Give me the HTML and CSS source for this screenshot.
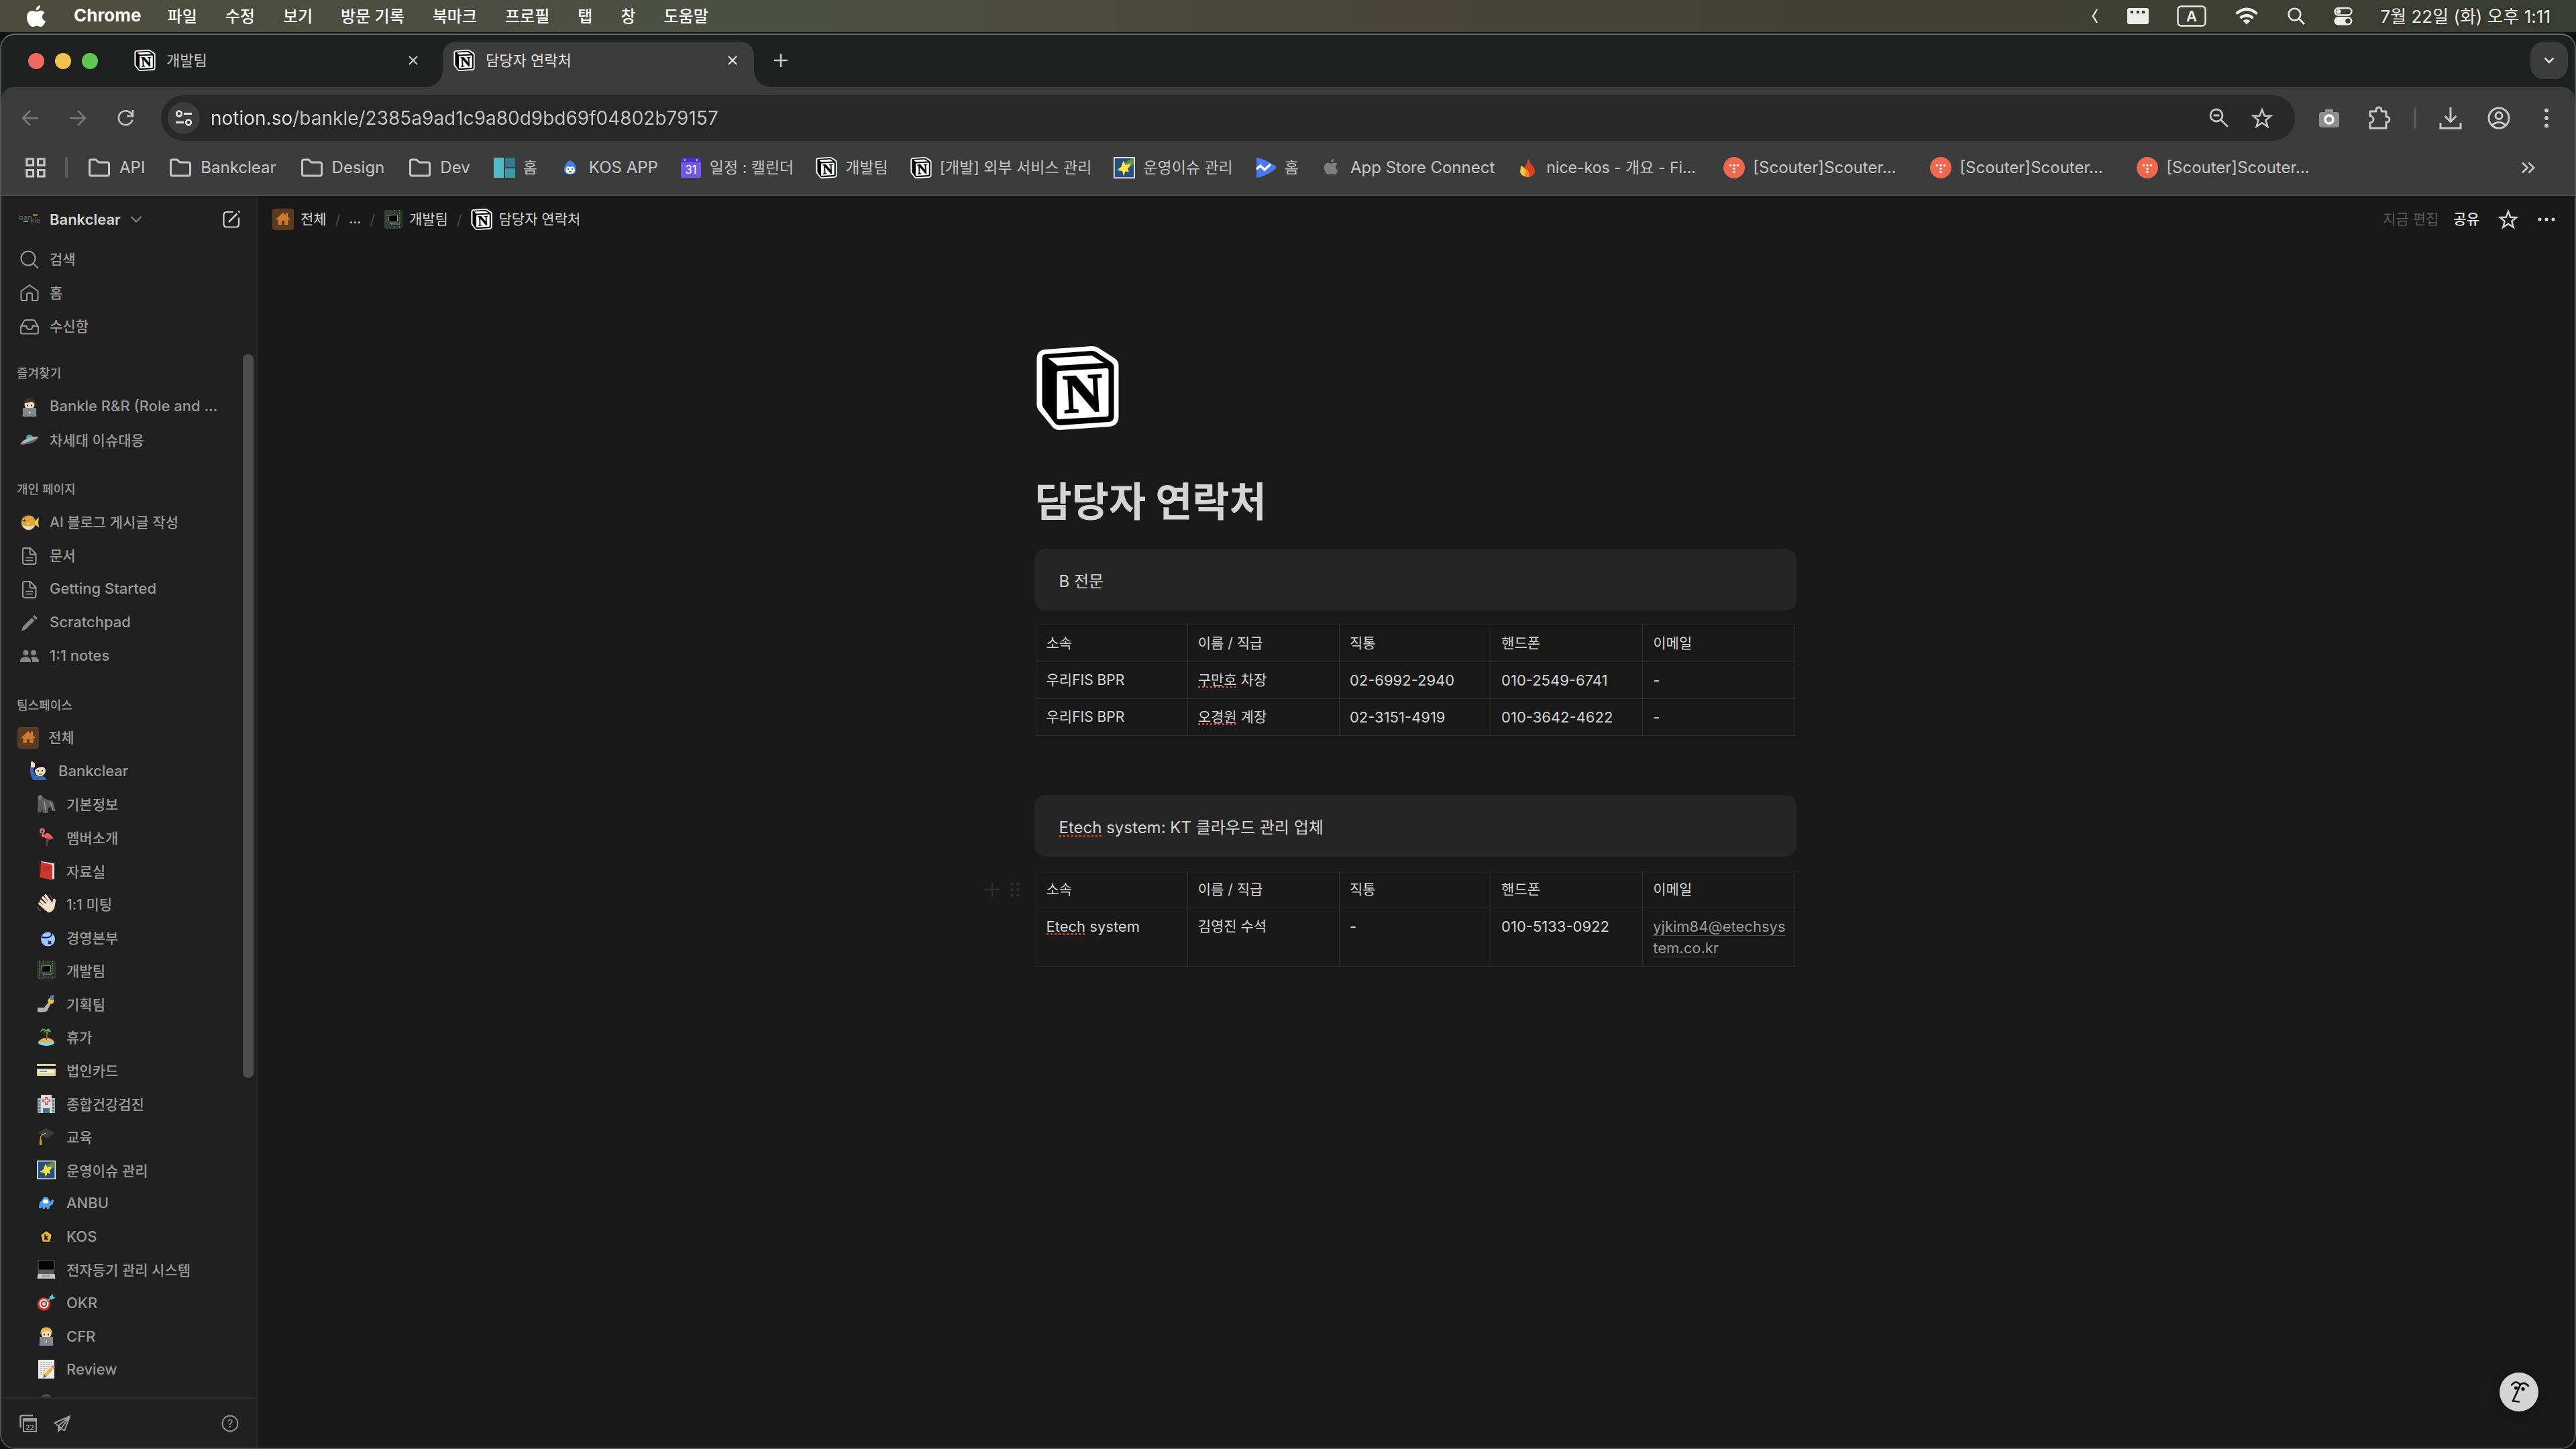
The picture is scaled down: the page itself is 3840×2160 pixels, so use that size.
FILE: index.html
```html
<!DOCTYPE html>
<html lang="ko">
<head>
<meta charset="utf-8">
<title>담당자 연락처</title>
<link rel="stylesheet" href="styles.css">
</head>
<body>
<svg class="sprite" aria-hidden="true">
  <symbol id="notion" viewBox="0 0 122 125">
    <path fill="#fff" d="M12 5 82 0Q87 0 91 2L116 18Q122 22 122 29V106Q121 119 108 120L34 125Q27 125 23 120L4 97Q0 92 0 87V18Q1 6 12 5Z"/>
    <path fill="#000" d="M13 12 82 7Q86 7 89 9L111 24Q115 27 115 31V106Q114 113 107 113L34 118Q30 118 27 115L10 92Q8 89 8 86V18Q8 12 13 12Z"/>
    <path fill="#fff" d="M17 18 82 14 100 25 31 29ZM33 37 104 33Q107 33 107 36V102Q107 105 104 105L33 109Q30 109 30 106V40Q30 37 33 37Z"/>
    <text x="69" y="98" transform="rotate(-3 69 72)" text-anchor="middle" font-family="Liberation Serif, serif" font-weight="700" font-size="82" stroke="#000" stroke-width="2">N</text>
  </symbol>
  <symbol id="apple" viewBox="0 0 28 32"><path fill="currentColor" d="M20 0C20.400 4 16.500 7.600 13.600 7.400 13.300 3.800 16.600.4 20 0ZM26.500 11C21 14.500 22 21.500 28 23.600 26.500 27.500 23.600 32 20.700 32 18.300 32 17.600 30.500 14.900 30.500 12 30.500 11.200 32 9 32 4.500 32 0 24 0 17.500 0 11 4.200 8 8 8 10.500 8 12.600 9.600 14.200 9.600 15.800 9.600 18 7.800 21 7.800 23 7.800 25.200 8.800 26.500 11Z"/></symbol>
  <symbol id="x" viewBox="0 0 16 16"><path d="M2 2 14 14M14 2 2 14" fill="none" stroke="currentColor" stroke-width="2.200"/></symbol>
  <symbol id="folder" viewBox="0 0 36 36"><path d="M3.500 8.500Q3.500 6 6 6H13L17 10H30Q32.500 10 32.500 12.500V27.500Q32.500 30 30 30H6Q3.500 30 3.500 27.500Z" fill="none" stroke="currentColor" stroke-width="3" stroke-linejoin="round"/></symbol>
  <symbol id="star" viewBox="0 0 32 32"><path d="M16 3.500 19.500 12.500 29 13 21.600 19 24.200 28.500 16 23.200 7.800 28.500 10.400 19 3 13 12.500 12.500Z" fill="none" stroke="currentColor" stroke-width="2.600" stroke-linejoin="miter"/></symbol>
  <symbol id="house" viewBox="0 0 32 32"><rect width="32" height="32" rx="4" fill="#5a3b22"/><path fill="#cb7b30" d="M16 6 20 9.500V6.500H23V12.300L26 15V16.500H23.500V24H18V18H14V24H8.500V16.500H6V15Z"/></symbol>
  <symbol id="term" viewBox="0 0 28 28"><rect width="28" height="28" rx="4" fill="#2e382e"/><path d="M3.500 0V28M9.500 0V28M16.500 0V28M23.500 0V28" stroke="#3a8a32" stroke-width="1.200" stroke-dasharray="2 1.500"/><path fill="#000" stroke="#999" d="M6.500 8 20.500 7.500V17L8 17.500Z"/><path fill="#888" stroke="#111" d="M6 18H21L25.500 22.500H11Z"/><path d="M10 19.500H21M12 21H23" stroke="#333" stroke-width=".8"/><path d="M8.500 10 10 11" stroke="#4b4"/></symbol>
  <symbol id="doc" viewBox="0 0 28 28"><path d="M6 2H15L23.500 10.500V23Q23.500 26 20.500 26H7Q4 26 4 23V4Q4 2 6 2ZM14.500 2V9Q14.500 11.500 17 11.500H23.500" fill="none" stroke="currentColor" stroke-width="2"/><path d="M8.500 16.500H19M8.500 20.500H19" stroke="currentColor" stroke-width="1.600"/></symbol>
  <symbol id="shoot" viewBox="0 0 28 28"><rect width="28" height="28" fill="#f2f2ee"/><rect x="1.500" y="1.500" width="25" height="25" fill="#274f80"/><path fill="#71893f" d="M13 8 24 2H26.500V9L18 16Z"/><path fill="#ffe34d" d="M12.500 5 15.500 10.500 23 9 18.500 15 20 20 15.500 18.500 13 25 11.500 18.500 4.500 17 10 13Z"/></symbol>
  <symbol id="scouter" viewBox="0 0 32 32"><circle cx="16" cy="16" r="16" fill="#ee6950"/><path fill="#fff" d="M9 11H12V14H9ZM14.500 11H17.500V14H14.500ZM20 11H23V14H20ZM14.500 16H17.500V19H14.500ZM14.500 21H17.500V24H14.500Z"/></symbol>
  <symbol id="coder" viewBox="0 0 28 28"><path fill="#3028c8" d="M2 28Q3 22 7 21H21Q25 22 26 28Z"/><circle cx="14" cy="10" r="7.500" class="skin"/><path class="hair" d="M5.500 12Q4 1 14 .5 24 1 22.500 12 21 6 16 6 9 8 6.500 8Z"/><path d="M10 11.500H12M16 11.500H18" stroke="#222" stroke-width="2"/><rect x="4" y="15" width="20" height="13" rx="1" fill="#868789"/><circle cx="14" cy="22" r="1.200" fill="#eee"/></symbol>
</svg>

<header class="menubar">
  <nav class="menus" aria-label="메뉴 막대">
    <button class="mb" aria-label="Apple"><svg width="28" height="32"><use href="#apple"/></svg></button>
    <button class="mb app">Chrome</button>
    <button class="mb word">파일</button><button class="mb word">수정</button><button class="mb word">보기</button><button class="mb word">방문 기록</button><button class="mb word">북마크</button><button class="mb word">프로필</button><button class="mb word">탭</button><button class="mb word">창</button><button class="mb word">도움말</button>
  </nav>
  <div class="status">
    <button class="mb" aria-label="더 보기"><svg width="12" height="24" viewBox="0 0 12 24"><path d="M9 2 3 12 9 22" fill="none" stroke="currentColor" stroke-width="2.400"/></svg></button>
    <button class="mb" aria-label="키보드"><svg width="32" height="24" viewBox="0 0 32 24"><rect width="32" height="24" rx="3" fill="currentColor"/><path d="M5 6H9M14 6H18M22 6H26" stroke="#333" stroke-width="4"/></svg></button>
    <button class="mb" aria-label="입력 소스"><svg width="44" height="32" viewBox="0 0 44 32"><rect x="1.500" y="1.500" width="41" height="29" rx="5" fill="none" stroke="currentColor" stroke-width="2.400"/><text x="22" y="24" text-anchor="middle" font-size="22" font-weight="600" fill="currentColor">A</text></svg></button>
    <button class="mb" aria-label="Wi-Fi"><svg width="36" height="26" viewBox="0 0 36 26"><path d="M2.500 9.500Q18-4 33.500 9.500M8.500 16Q18 8 27.500 16" fill="none" stroke="currentColor" stroke-width="4.200"/><path fill="currentColor" d="M12.500 20Q18 16 23.500 20L18 25.500Z"/></svg></button>
    <button class="mb" aria-label="Spotlight"><svg width="28" height="28" viewBox="0 0 28 28"><circle cx="11.500" cy="11.500" r="8.800" fill="none" stroke="currentColor" stroke-width="2.600"/><path d="M18 18 26 26" stroke="currentColor" stroke-width="3"/></svg></button>
    <button class="mb" aria-label="제어 센터"><svg width="28" height="28" viewBox="0 0 28 28"><rect x="1.500" y="2" width="25" height="10.500" rx="5.200" fill="none" stroke="currentColor" stroke-width="2.400"/><circle cx="7" cy="7.200" r="3.500" fill="currentColor"/><rect x=".5" y="15" width="27" height="12.500" rx="6.200" fill="currentColor"/><circle cx="21" cy="21.200" r="3.800" fill="#3a3d34"/></svg></button>
    <time class="clock word">7월 22일 (화) 오후 1:11</time>
  </div>
</header>

<div class="window">
  <div class="tabstrip">
    <div class="lights"><button class="light red" aria-label="닫기"></button><button class="light amber" aria-label="최소화"></button><button class="light green" aria-label="확대"></button></div>
    <div class="tab"><svg width="32" height="32"><use href="#notion"/></svg><a href="#dev" class="tab-title">개발팀</a><button class="ic" aria-label="탭 닫기"><svg width="16" height="16"><use href="#x"/></svg></button></div>
    <div class="tab active"><svg width="32" height="32"><use href="#notion"/></svg><a href="#contacts" class="tab-title">담당자 연락처</a><button class="ic" aria-label="탭 닫기"><svg width="16" height="16"><use href="#x"/></svg></button></div>
    <button class="ic newtab" aria-label="새 탭"><svg width="20" height="20" viewBox="0 0 20 20"><path d="M10 0V20M0 10H20" stroke="currentColor" stroke-width="2.600"/></svg></button>
    <button class="ic tabsearch" aria-label="탭 검색"><svg width="16" height="10" viewBox="0 0 16 10"><path d="M1.500 1.500 8 8 14.500 1.500" fill="none" stroke="currentColor" stroke-width="2.600"/></svg></button>
  </div>

  <div class="chrome">
    <div class="toolbar">
      <div class="navs">
        <button class="ic dim" aria-label="뒤로"><svg width="26" height="26" viewBox="0 0 26 26"><path d="M25 13H2M13 2 2 13 13 24" fill="none" stroke="currentColor" stroke-width="2.600"/></svg></button>
        <button class="ic dim" aria-label="앞으로"><svg width="26" height="26" viewBox="0 0 26 26"><path d="M1 13H24M13 2 24 13 13 24" fill="none" stroke="currentColor" stroke-width="2.600"/></svg></button>
        <button class="ic" aria-label="새로고침"><svg width="26" height="26" viewBox="0 0 26 26"><path d="M23.500 15.500A10.500 10.500 0 1 1 21 5.500L23 8" fill="none" stroke="currentColor" stroke-width="2.600"/><path d="M24 1V10H15" fill="none" stroke="currentColor" stroke-width="2.600"/></svg></button>
      </div>
      <div class="omnibox">
        <button class="ic site" aria-label="사이트 정보"><svg width="26" height="26" viewBox="0 0 26 26"><g fill="none" stroke="currentColor" stroke-width="2.800"><circle cx="6" cy="6.500" r="3.800"/><path d="M13 6.500H25M1 19.500H13"/><circle cx="20" cy="19.500" r="3.800"/></g></svg></button>
        <input class="url" type="text" aria-label="주소창" value="notion.so/bankle/2385a9ad1c9a80d9bd69f04802b79157">
        <button class="ic" aria-label="확대/축소"><svg width="32" height="32" viewBox="0 0 32 32"><g fill="none" stroke="currentColor" stroke-width="2.800"><circle cx="12" cy="12" r="9"/><path d="M18.500 18.500 29 29M7.500 12H16.500"/></g></svg></button>
        <button class="ic" aria-label="북마크 추가"><svg width="32" height="32"><use href="#star"/></svg></button>
      </div>
      <div class="exts">
        <button class="ic" aria-label="캡처"><svg width="32" height="32" viewBox="0 0 32 32"><rect x="1" y="7" width="30" height="23" rx="4" fill="#8e8e8e"/><rect x="10" y="2" width="12" height="8" rx="3" fill="#8e8e8e"/><circle cx="16" cy="18" r="6" fill="#8e8e8e" stroke="#fff" stroke-width="3.500"/></svg></button>
        <button class="ic" aria-label="확장 프로그램"><svg width="34" height="36" viewBox="0 0 34 36"><path d="M3 8H12V6A4 4 0 0 1 20 6V8H27V16H28A4 4 0 0 1 28 24H27V33H3V25A5 5 0 0 0 3 15Z" fill="none" stroke="currentColor" stroke-width="3" stroke-linejoin="round"/></svg></button>
        <span class="sep"></span>
        <button class="ic" aria-label="다운로드"><svg width="34" height="34" viewBox="0 0 34 34"><path d="M17 1V22M8.500 14 17 22.500 25.500 14M2 24V32H32V24" fill="none" stroke="currentColor" stroke-width="3"/></svg></button>
        <button class="ic" aria-label="프로필"><svg width="34" height="34" viewBox="0 0 34 34"><g fill="none" stroke="currentColor" stroke-width="3"><circle cx="17" cy="17" r="15"/><circle cx="17" cy="13.500" r="5"/><path d="M7 27.500Q17 19 27 27.500"/></g></svg></button>
        <button class="ic" aria-label="메뉴"><svg width="8" height="32" viewBox="0 0 8 32"><g fill="currentColor"><circle cx="4" cy="4.500" r="3"/><circle cx="4" cy="16" r="3"/><circle cx="4" cy="27.500" r="3"/></g></svg></button>
      </div>
    </div>
    <nav class="bookmarks" aria-label="북마크">
      <button class="ic" aria-label="앱"><svg width="30" height="30" viewBox="0 0 30 30"><path d="M2 2H11.500V11.500H2ZM18.500 2H28V11.500H18.500ZM2 18.500H11.500V28H2ZM18.500 18.500H28V28H18.500Z" fill="none" stroke="currentColor" stroke-width="3.200"/></svg></button>
      <span class="sep"></span>
      <a class="bm folder" href="#api"><svg width="36" height="36"><use href="#folder"/></svg>API</a>
      <a class="bm folder" href="#bc"><svg width="36" height="36"><use href="#folder"/></svg>Bankclear</a>
      <a class="bm folder" href="#design"><svg width="36" height="36"><use href="#folder"/></svg>Design</a>
      <a class="bm folder" href="#devs"><svg width="36" height="36"><use href="#folder"/></svg>Dev</a>
      <a class="bm ko" href="#home"><svg width="32" height="32" viewBox="0 0 32 32"><path fill="#53b9c4" d="M0 1H15V31H0Z"/><path fill="#357c8a" d="M17 1H32V15H17Z"/><path fill="#4098a7" d="M17 17H32V31H17Z"/></svg>홈</a>
      <a class="bm" href="#kosapp"><svg width="32" height="32" viewBox="0 0 32 32"><path fill="#3f7de8" d="M16 5Q23 7 25 17 26 26 16 26 6 26 7 17 9 7 16 5Z"/><path fill="#fff" d="M10 16Q12 13 16 15 20 13 22 16 25 25 16 25 7 25 10 16Z"/><path d="M12 18H14M18 18H20M14 22H18" stroke="#333" stroke-width="1.500"/></svg>KOS APP</a>
      <a class="bm ko" href="#cal"><svg width="32" height="32" viewBox="0 0 32 32"><rect x="1" y="1" width="30" height="30" rx="2" fill="#7357e8"/><path fill="#4f2fc0" d="M1 1H31V8H1Z"/><path d="M6 4.500H8M24 4.500H26" stroke="#fff" stroke-width="2"/><text x="16" y="25" text-anchor="middle" font-size="17" fill="#fff">31</text></svg>일정 : 캘린더</a>
      <a class="bm ko" href="#dev"><svg width="32" height="32"><use href="#notion"/></svg>개발팀</a>
      <a class="bm ko" href="#ext"><svg width="32" height="32"><use href="#notion"/></svg>[개발] 외부 서비스 관리</a>
      <a class="bm ko" href="#issues"><svg width="32" height="32"><use href="#shoot"/></svg>운영이슈 관리</a>
      <a class="bm ko" href="#home2"><svg width="32" height="32" viewBox="0 0 32 32"><path fill="#4a7bee" d="M2 1Q12 2 30 13 33 16 30 18 16 29 2 31Z"/><path d="M2 18 8 13 14 19 23 11" fill="none" stroke="#fff" stroke-width="3.500"/></svg>홈</a>
      <a class="bm" href="#asc"><svg width="32" height="32" viewBox="-7 -4 46 46" class="grey"><use href="#apple" width="30" height="34"/></svg>App Store Connect</a>
      <a class="bm ko cut" href="#nice"><svg width="32" height="32" viewBox="0 0 32 32"><path fill="#d8441f" d="M17 2Q20 10 25 15 31 26 19 30 10 28 10 18 15 12 17 2Z"/><path fill="#f9c440" d="M6 13Q15 16 18 30 8 30 5 23Z"/><path fill="#f08a27" d="M14 18Q20 22 18 30 14 30 12 28Z"/></svg>nice-kos - 개요 - Fi...</a>
      <a class="bm cut" href="#s1"><svg width="32" height="32"><use href="#scouter"/></svg>[Scouter]Scouter...</a>
      <a class="bm cut" href="#s2"><svg width="32" height="32"><use href="#scouter"/></svg>[Scouter]Scouter...</a>
      <a class="bm cut" href="#s3"><svg width="32" height="32"><use href="#scouter"/></svg>[Scouter]Scouter...</a>
      <button class="ic more" aria-label="북마크 더보기"><svg width="22" height="18" viewBox="0 0 22 18"><path d="M2 1.500 9.500 9 2 16.500M11.500 1.500 19 9 11.500 16.500" fill="none" stroke="currentColor" stroke-width="2.800"/></svg></button>
    </nav>
  </div>

  <div class="page">
    <aside class="sidebar">
      <div class="workspace">
        <svg width="32" height="18" viewBox="0 0 32 18"><g font-size="11" font-weight="500" fill="#5d5d5d"><text x="0" y="10">ban</text><text x="17" y="14">kle</text></g><path d="M21 2.500H28" stroke="#d2a43a" stroke-width="2"/><path d="M7 12H14" stroke="#4aa6b8" stroke-width="2"/></svg>
        <button class="ws-name">Bankclear<svg width="18" height="10" viewBox="0 0 18 10"><path d="M1.500 1 9 8.500 16.500 1" fill="none" stroke="#8a8a8a" stroke-width="2"/></svg></button>
        <button class="ic compose" aria-label="새 페이지"><svg width="26" height="26" viewBox="0 0 26 26"><path d="M15.500 2H6Q1.500 2 1.500 6.500V20Q1.500 24.500 6 24.500H19.500Q24 24.500 24 20V10.500" fill="none" stroke="currentColor" stroke-width="2.200"/><path d="M9 17 21.500 4.500M23.500 2.500 25 1" stroke="currentColor" stroke-width="2.600"/></svg></button>
      </div>
      <nav class="links">
        <a class="row" href="#search"><svg width="28" height="28" viewBox="0 0 28 28"><g fill="none" stroke="currentColor" stroke-width="2"><circle cx="12" cy="12" r="10.500"/><path d="M19.500 19.500 27 27"/></g></svg><span>검색</span></a>
        <a class="row" href="#h"><svg width="28" height="28" viewBox="0 0 28 28"><path d="M1.500 11 14 2 26.500 11V23Q26.500 25 24.500 25H18V16Q18 14 16 14H12Q10 14 10 16V25H3.500Q1.500 25 1.500 23Z" fill="none" stroke="currentColor" stroke-width="2" stroke-linejoin="round"/></svg><span>홈</span></a>
        <a class="row" href="#inbox"><svg width="28" height="28" viewBox="0 0 28 28"><path d="M1 14 6 5.500Q7 4 8.500 4H19.500Q21 4 22 5.500L27 14V22Q27 24.500 24.500 24.500H3.500Q1 24.500 1 22ZM1 13H9.500Q9.500 18 14 18 18.500 18 18.500 13H27" fill="none" stroke="currentColor" stroke-width="2" stroke-linejoin="round"/></svg><span>수신함</span></a>
      </nav>
      <h2 class="sect">즐겨찾기</h2>
      <nav class="links">
        <a class="row en" href="#rr"><svg width="28" height="28" class="dark-hair"><use href="#coder"/></svg><span>Bankle R&amp;R (Role and ...</span></a>
        <a class="row" href="#ng"><svg width="28" height="28" viewBox="0 0 28 28"><ellipse cx="14" cy="9" rx="5" ry="4" fill="#3fa9b5"/><path fill="#b5b5b5" d="M0 19Q6 11 16 9 24 7 28 8 24 15 14 18 6 20 0 19Z"/><path fill="#666" d="M0 19Q12 17 28 8 24 16 14 18 6 21 0 19Z"/></svg><span>차세대 이슈대응</span></a>
      </nav>
      <h2 class="sect">개인 페이지</h2>
      <nav class="links">
        <a class="row" href="#ai"><svg width="28" height="28" viewBox="0 0 28 28"><circle cx="12.500" cy="14" r="10.500" fill="#e3a13c" stroke="#b98235" stroke-width="2.500" stroke-dasharray="1 2"/><path fill="#ead9bd" d="M3 17Q12 22 22 17 19 25 12 25 6 24 3 17Z"/><path fill="#e6cf3f" d="M22 12 28 6 27 14 28 21 22 17ZM9 14H15L12 19Z"/><circle cx="6.500" cy="11" r="1.600" fill="#111"/></svg><span>AI 블로그 게시글 작성</span></a>
        <a class="row" href="#docs"><svg width="28" height="28"><use href="#doc"/></svg><span>문서</span></a>
        <a class="row en" href="#gs"><svg width="28" height="28"><use href="#doc"/></svg><span>Getting Started</span></a>
        <a class="row en" href="#sp"><svg width="28" height="28" viewBox="0 0 28 28"><path fill="#868686" d="M2 26 4 19 17.500 6 21.500 10 8.500 23ZM19 4.500 21.500 2 26 6.500 23.500 9Z"/></svg><span>Scratchpad</span></a>
        <a class="row en" href="#notes"><svg width="28" height="28" viewBox="0 0 28 28"><g fill="#868686"><circle cx="8.500" cy="8" r="4"/><circle cx="20" cy="8" r="4"/><path d="M0 22Q0 14 8 14 16 14 16 22ZM15.500 14.500Q18 16 18 22H28Q28 14 20 14 17 14 15.500 14.500Z"/></g></svg><span>1:1 notes</span></a>
      </nav>
      <h2 class="sect">팀스페이스</h2>
      <a class="row space" href="#all"><svg width="32" height="32"><use href="#house"/></svg><span>전체</span></a>
      <nav class="team">
        <a class="row en l1" href="#t0"><svg width="28" height="28" viewBox="0 0 28 28"><path fill="#3965b5" d="M2 9H7Q7 20 12 21L24 23 26 28H7Q1 22 2 9Z"/><path fill="#f3dcc0" d="M3 1 5 0 9 3V9H3Z"/><circle cx="17" cy="14" r="8" fill="#f3dcc0"/><path fill="#171312" d="M8 14Q7 4 17 4 27 4 26 14 24 9 21 8 12 8 8 14Z"/><path d="M13 14H15M19 14H21" stroke="#222" stroke-width="2"/><path d="M15 19H20" stroke="#b65" stroke-width="1.500"/></svg><span>Bankclear</span></a>
        <a class="row" href="#t1"><svg width="28" height="28" viewBox="0 0 28 28"><path fill="#5d5e60" d="M1 6Q2 0 6 1 9 2 9 5L18 9Q26 9 26 18L28 25H23L21 19 17 20 16 28H9L8 20 6 27H1Q1 18 2 12Z"/><path fill="#8a7468" d="M2 5Q3 1 7 2L6 8H3Z"/><path d="M11 10 13 24M20 12 24 24" stroke="#999" stroke-width="1.500"/></svg><span>기본정보</span></a>
        <a class="row" href="#t2"><svg width="28" height="28" viewBox="0 0 28 28"><path d="M6 8Q4 2 8 2 13 3 9 8 6 13 12 13" fill="none" stroke="#e8797b" stroke-width="2.500"/><path fill="#e45f61" d="M9 12Q15 5 20 10L25 16Q14 18 9 12Z"/><path d="M15 16V27M16 19 21 16" stroke="#8c4b48" stroke-width="1.500"/></svg><span>멤버소개</span></a>
        <a class="row" href="#t3"><svg width="28" height="28" viewBox="0 0 28 28"><path fill="#5e1712" d="M3 1 7 0V25L3 23Z"/><path fill="#ddd" d="M6 0 26 3V26L22 27Z"/><path fill="#c8392b" d="M6 1 23 5V28L5 24Z"/><path d="M9 8 19 10M10 11 18 12.500" stroke="#8c251c"/></svg><span>자료실</span></a>
        <a class="row" href="#t4"><svg width="28" height="28" viewBox="0 0 28 28"><path d="M6 10 15 19M9 5 18 15M13 2 21 13M4 14 14 23" stroke="#f6dfc8" stroke-width="3.600" stroke-linecap="round"/><path fill="#f6dfc8" d="M8 16 20 10 23 14 24 7Q28 5 28 10L26 21Q22 28 16 27Z"/><path d="M18 1Q22 3 22 7M1 19Q2 23 6 25" fill="none" stroke="#666" stroke-width="1.200"/></svg><span>1:1 미팅</span></a>
        <a class="row" href="#t5"><svg width="28" height="28" viewBox="0 0 28 28"><circle cx="16.500" cy="17" r="10.500" fill="#9cc6f5"/><path d="M7 14Q16 16 20 13 23 11 21 5M6 5 9 8M9 5 6 8M17 20 21 24M21 20 17 24" fill="none" stroke="#171a52" stroke-width="2"/></svg><span>경영본부</span></a>
        <a class="row" href="#dev"><svg width="28" height="28"><use href="#term"/></svg><span>개발팀</span></a>
        <a class="row" href="#t7"><svg width="28" height="28" viewBox="0 0 28 28"><path fill="#b3b0ae" d="M1 20 11 20 18 11 21 14 15 25Q12 27 1 27Z"/><circle cx="21" cy="10" r="4.500" fill="#f0c13c"/><path fill="#4c86b5" d="M20 2 26 1 24 9 20 9Z"/></svg><span>기획팀</span></a>
        <a class="row" href="#t8"><svg width="28" height="28" viewBox="0 0 28 28"><ellipse cx="14" cy="23" rx="12" ry="5" fill="#7de0e0"/><path fill="#e9ad59" d="M3 21Q8 16 14 16 21 16 25 21 14 26 3 21Z"/><path d="M14 6Q16 12 14 19" fill="none" stroke="#8a6038" stroke-width="2"/><path fill="#5cae4b" d="M14 5Q17-1 22 8 16 6 14 6 16 8 18 11 14 10 13 6 10 8 9 11 10 7 12 5 8 4 5 8 7-1 14 5Z"/></svg><span>휴가</span></a>
        <a class="row" href="#t9"><svg width="28" height="28" viewBox="0 0 28 28"><rect y="5" width="28" height="18" rx="1" fill="#ddd49a"/><path fill="#161410" d="M0 8H28V12H0Z"/><path fill="#f2f2f2" d="M2 14H26V18H2Z"/><path d="M4 16H15" stroke="#5a7fc0" stroke-width="1.500"/></svg><span>법인카드</span></a>
        <a class="row" href="#t10"><svg width="28" height="28" viewBox="0 0 28 28"><path fill="#a4acb0" d="M1 6H27V28H1Z"/><path fill="#d9dcdc" d="M6 1H22V28H6Z"/><path fill="#e14b4b" d="M12 4H16V8H20V12H16V16H12V12H8V8H12Z"/><path fill="#f3f3f3" d="M13.300 6H14.700V14H13.300ZM10 9.300H18V10.700H10Z"/><path fill="#46708e" d="M9 21H19V28H9Z"/><path d="M3.500 9V26M24.500 9V26" stroke="#46708e" stroke-width="2" stroke-dasharray="3 2"/></svg><span>종합건강검진</span></a>
        <a class="row" href="#t11"><svg width="28" height="28" viewBox="0 0 28 28"><path fill="#222325" d="M9 13 22 14 21 21Q15 24 9 19Z"/><path fill="#3b3c3f" d="M1 8 14 2 27 9 15 17Z"/><path d="M14 9Q6 11 5.500 16V22" fill="none" stroke="#d99a35" stroke-width="1.600"/><path fill="#d99a35" d="M4 20H7.500L7 27H4Z"/></svg><span>교육</span></a>
        <a class="row" href="#issues"><svg width="28" height="28"><use href="#shoot"/></svg><span>운영이슈 관리</span></a>
        <a class="row en" href="#t13"><svg width="28" height="28" viewBox="0 0 28 28"><path fill="#4b9fec" d="M8 10Q9 5 13 5 17 5 18 10L21 13 22 9 25 10Q25 17 20 18L18 23H15V21H12V23H9L8 19 7 22H3Q3 12 8 10Z"/><ellipse cx="13" cy="12" rx="4" ry="3" fill="#fff"/></svg><span>ANBU</span></a>
        <a class="row en" href="#t14"><svg width="28" height="28" viewBox="0 0 28 28"><path fill="#e8b339" stroke="#121212" stroke-width="2" d="M14 5 23 11.500 20 23H8L5 11.500Z"/><text x="14" y="20" text-anchor="middle" font-size="12" font-weight="700" fill="#111">k</text></svg><span>KOS</span></a>
        <a class="row" href="#t15"><svg width="28" height="28" viewBox="0 0 28 28"><path fill="#050505" stroke="#777" stroke-width=".8" d="M2 0.500H26V15H2Z"/><path fill="#555" d="M2 15H26V21H2Z"/><path fill="#c5c5c7" d="M1.500 21H26.500L27.500 28H.5Z"/><path fill="#a1a1a3" d="M8 22H20V26H8Z"/></svg><span>전자등기 관리 시스템</span></a>
        <a class="row en" href="#t16"><svg width="28" height="28" viewBox="0 0 28 28"><circle cx="10.500" cy="16" r="10" fill="#c43127"/><circle cx="10.500" cy="15.500" r="7" fill="#eee"/><circle cx="10.500" cy="15.500" r="4.800" fill="#c43127"/><circle cx="10.500" cy="15.500" r="2.500" fill="#eee"/><path d="M11 15 22 6" stroke="#49aab5" stroke-width="2.500"/><path fill="#62c3cf" d="M19 5 24 1V5L28 6 23 9H19Z"/></svg><span>OKR</span></a>
        <a class="row en" href="#t17"><svg width="28" height="28" class="fair-hair"><use href="#coder"/></svg><span>CFR</span></a>
        <a class="row en" href="#t18"><svg width="28" height="28" viewBox="0 0 28 28"><path fill="#ecebe8" d="M2 0H26V28H2Z"/><path d="M5 4H22M5 7H21M5 10H20M5 13H16M5 16H14M5 19H11M5 22H10" stroke="#999" stroke-dasharray="3 1"/><path d="M12 24 22 13" stroke="#eab63f" stroke-width="5"/><path fill="#e07a83" d="M21 10 24 8 27 11 25 14Z"/><path fill="#6b4a2a" d="M9 27 11 22 14 25Z"/></svg><span>Review</span></a>
      </nav>
      <div class="peek"><svg width="28" height="28" viewBox="0 0 28 28"><circle cx="14" cy="12" r="9" fill="#4f484a"/></svg></div>
      <div class="scroll"></div>
      <footer class="side-foot">
        <button class="ic" aria-label="캘린더"><svg width="26" height="28" viewBox="0 0 26 28"><path d="M20 2H4Q1.500 2 1.500 4.500V20" fill="none" stroke="currentColor" stroke-width="2.600"/><rect x="6" y="7" width="19" height="19" fill="none" stroke="currentColor" stroke-width="2"/><path d="M6 6H25V11H6Z" fill="currentColor"/><text x="15.500" y="23.500" text-anchor="middle" font-size="13" font-weight="700" font-family="Liberation Serif, serif" fill="currentColor">22</text></svg></button>
        <button class="ic" aria-label="메일"><svg width="26" height="26" viewBox="0 0 26 26"><path d="M24.500 2 1.500 12 7 16.500V24.500L11 20.500 16 23.500ZM7 16.500 24.500 2 11 20.500" fill="none" stroke="currentColor" stroke-width="2" stroke-linejoin="round"/><path d="M7 16.500 12 18.500 7 24.500Z" fill="currentColor"/></svg></button>
        <button class="ic help" aria-label="도움말"><svg width="26" height="26" viewBox="0 0 26 26"><circle cx="13" cy="13" r="11.500" fill="none" stroke="currentColor" stroke-width="1.800"/><text x="13" y="19" text-anchor="middle" font-size="16" fill="currentColor">?</text></svg></button>
      </footer>
    </aside>

    <main class="main">
      <div class="topbar">
        <nav class="crumbs" aria-label="경로">
          <a href="#all"><svg width="32" height="32"><use href="#house"/></svg><span>전체</span></a><i>/</i><a class="dots" href="#more"><span>...</span></a><i>/</i><a href="#dev"><svg width="28" height="28"><use href="#term"/></svg><span>개발팀</span></a><i>/</i><a class="here" href="#contacts"><svg width="32" height="32"><use href="#notion"/></svg><span>담당자 연락처</span></a>
        </nav>
        <div class="actions">
          <span class="edited">지금 편집</span>
          <button class="share">공유</button>
          <button class="ic" aria-label="즐겨찾기"><svg width="30" height="30"><use href="#star"/></svg></button>
          <button class="ic" aria-label="더보기"><svg width="28" height="8" viewBox="0 0 28 8"><g fill="currentColor"><circle cx="4" cy="4" r="2.600"/><circle cx="14" cy="4" r="2.600"/><circle cx="24" cy="4" r="2.600"/></g></svg></button>
        </div>
      </div>

      <article class="doc">
        <svg class="page-icon" width="125" height="125"><use href="#notion"/></svg>
        <h1>담당자 연락처</h1>
        <div class="callout">B 전문</div>
        <div class="tablewrap">
          <table>
            <tr><td>소속</td><td>이름 / 직급</td><td>직통</td><td>핸드폰</td><td>이메일</td></tr>
            <tr><td>우리FIS BPR</td><td><span class="sp">구만호</span> 차장</td><td class="num">02-6992-2940</td><td class="num">010-2549-6741</td><td class="num">-</td></tr>
            <tr><td>우리FIS BPR</td><td><span class="sp">오경원</span> 계장</td><td class="num">02-3151-4919</td><td class="num">010-3642-4622</td><td class="num">-</td></tr>
          </table>
        </div>
        <div class="callout second"><span class="sp">Etech</span> system: KT 클라우드 관리 업체</div>
        <div class="tablewrap">
          <div class="handle">
            <button class="ic" aria-label="블록 추가"><svg width="22" height="22" viewBox="0 0 22 22"><path d="M11 0V22M0 11H22" stroke="currentColor" stroke-width="2.400"/></svg></button>
            <button class="ic" aria-label="블록 이동"><svg width="14" height="22" viewBox="0 0 14 22"><g fill="currentColor"><circle cx="2.500" cy="2.500" r="2.200"/><circle cx="11.500" cy="2.500" r="2.200"/><circle cx="2.500" cy="11" r="2.200"/><circle cx="11.500" cy="11" r="2.200"/><circle cx="2.500" cy="19.500" r="2.200"/><circle cx="11.500" cy="19.500" r="2.200"/></g></svg></button>
          </div>
          <table>
            <tr><td>소속</td><td>이름 / 직급</td><td>직통</td><td>핸드폰</td><td>이메일</td></tr>
            <tr><td class="num"><span class="sp">Etech</span> system</td><td>김영진 수석</td><td class="num">-</td><td class="num">010-5133-0922</td><td class="num"><a class="mail" href="mailto:yjkim84@etechsystem.co.kr">yjkim84@etechsystem.co.kr</a></td></tr>
          </table>
        </div>
      </article>
      <button class="fab" aria-label="AI"><svg width="58" height="58" viewBox="0 0 58 58"><g fill="none" stroke="#0c0c0c" stroke-width="2.600" stroke-linecap="round"><path d="M18 18.500Q25 10.500 31 18.500M43 20Q36 12.500 31 18.500L20 42.500 29 43.500"/></g><circle cx="24.500" cy="23" r="2.600"/><circle cx="35" cy="24.500" r="2.600"/></svg></button>
    </main>
  </div>
</div>
</body>
</html>
```
FILE: styles.css
```css
* { box-sizing: border-box; }

body {
  margin: 0;
  min-height: 100vh;
  display: flex;
  flex-direction: column;
  background: #10140f;
  color: #d4d4d4;
  font-family: Inter, "Noto Sans CJK KR", sans-serif;
  font-size: 22px;
}

.sprite { display: none; }
svg { display: block; flex: none; }
a { color: inherit; text-decoration: none; }
button {
  margin: 0;
  padding: 0;
  border: 0;
  background: none;
  color: inherit;
  font: inherit;
  white-space: nowrap;
}
.ic { flex: none; display: flex; align-items: center; justify-content: center; }
.sep { flex: none; width: 4px; height: 32px; border-radius: 2px; background: #5c5c5c; }

/* macOS menu bar */
.menubar {
  height: 48px;
  display: flex;
  justify-content: space-between;
  align-items: center;
  padding: 0 38px 0 40px;
  background: linear-gradient(90deg, #4b4c3e, #4c5042 30%, #484537 55%, #434334 67%, #3a3d34);
  color: #fff;
  font-size: 24px;
  font-weight: 500;
  text-shadow: 0 3px 6px rgba(0, 0, 0, .3);
}
.menus { display: flex; align-items: center; gap: 42px; }
.app { font-weight: 700; font-size: 26px; padding-bottom: 4px; margin-right: -3px; }
.word { padding-bottom: 4px; }
.status { display: flex; align-items: center; gap: 42px; color: #ecece8; }
.clock { white-space: nowrap; font-size: 26px; font-weight: 400; }

/* Browser window */
.window {
  flex: 1;
  display: flex;
  flex-direction: column;
  margin-top: 2px;
  border: 2px solid #555;
  border-top-color: #6c6e6d;
  border-radius: 22px;
  overflow: hidden;
  background: #1f2120;
}
.tabstrip { height: 78px; display: flex; align-items: flex-end; padding: 0 10px 0 40px; }
.lights { display: flex; gap: 16px; height: 78px; align-items: center; margin-right: 36px; }
.light { width: 24px; height: 24px; border-radius: 50%; }
.red { background: #ed6a5e; }
.amber { background: #f4bf4f; }
.green { background: #61c554; }
.tab {
  position: relative;
  width: 464px;
  height: 68px;
  display: flex;
  align-items: center;
  gap: 16px;
  padding: 0 24px 12px 16px;
  color: #c7c7c7;
}
.tab.active { background: #3c3c3c; border-radius: 20px 20px 0 0; color: #e3e3e3; margin-left: 12px; }
.tab:not(.active) { margin-left: 2px; }
.tab.active::before, .tab.active::after {
  content: "";
  position: absolute;
  bottom: 0;
  width: 24px;
  height: 24px;
}
.tab.active::before { left: -24px; background: radial-gradient(circle at 0 0, transparent 23px, #3c3c3c 24px); }
.tab.active::after { right: -24px; background: radial-gradient(circle at 100% 0, transparent 23px, #3c3c3c 24px); }
.tab-title { flex: 1; white-space: nowrap; padding-bottom: 4px; }
.newtab { margin: 0 0 30px 30px; color: #c7c7c7; }
.tabsearch { width: 56px; height: 56px; margin: 0 0 12px auto; border-radius: 20px; background: #3c3c3c; color: #e3e3e3; }

.chrome { background: #3c3c3c; border-radius: 18px 18px 0 0; border-bottom: 2px solid #484848; color: #c7c7c7; }
.toolbar { display: flex; align-items: center; padding: 12px 38px 0 30px; }
.navs { display: flex; gap: 45px; margin-right: 40px; }
.dim { color: #7a7a7a; }
.omnibox {
  flex: 1;
  height: 68px;
  display: flex;
  align-items: center;
  gap: 32px;
  padding: 0 33px 0 10px;
  border-radius: 34px;
  background: #282828;
}
.site { width: 48px; height: 48px; border-radius: 24px; background: #3c3c3c; color: #e3e3e3; }
.url {
  flex: 1;
  height: 40px;
  margin: 0 0 0 -16px;
  padding: 0;
  border: 0;
  outline: 0;
  font: 28px/40px Inter, "Noto Sans CJK KR", sans-serif;
  background: linear-gradient(90deg, #e3e3e3 123px, #c7c7c7 123px);
  background-clip: text;
  -webkit-background-clip: text;
  color: transparent;
}
.exts { display: flex; align-items: center; gap: 38px; margin-left: 35px; }
.exts .sep { margin: 0 -4px; }
.exts > :first-child { margin-right: 4px; }
.exts > :last-child { margin-left: 12px; }

.bookmarks { height: 80px; display: flex; align-items: center; gap: 33px; padding: 0 58px 0 36px; }
.bookmarks .sep { margin: 0 -4px; }
.bm { flex: none; display: flex; align-items: center; gap: 12px; white-space: nowrap; font-size: 24px; line-height: 32px; }
.bm.ko { font-size: 23px; }
.bm.folder { margin-right: 2px; }
.cut { width: 275px; }
.grey { color: #7f7f7f; }
.more { margin-left: auto; }

/* Workspace */
.page { flex: 1; display: flex; background: #191919; }
.sidebar {
  position: relative;
  flex: none;
  width: 382px;
  display: flex;
  flex-direction: column;
  background: #202020;
  border-right: 2px solid #282828;
  color: #9b9b9b;
}
.workspace { height: 70px; display: flex; align-items: center; gap: 14px; padding: 0 24px 0 26px; }
.ws-name { display: flex; align-items: center; gap: 14px; color: #d4d4d4; font-weight: 600; }
.compose { margin-left: auto; color: #d4d4d4; }
.row {
  height: 50px;
  display: flex;
  align-items: center;
  gap: 16px;
  padding-left: 28px;
  font-size: 21px;
  font-weight: 500;
  white-space: nowrap;
}
.row.en { font-size: 22px; }
.links span, .space span { padding-bottom: 4px; }
.sect { margin: 0; height: 70px; padding: 30px 0 0 23px; font-size: 18px; font-weight: 500; line-height: 30px; }
.links ~ .links + .sect { height: 72px; padding-top: 33px; }
.row.space { gap: 14px; padding-left: 24px; height: 48px; }
.team { flex: 1; display: grid; grid-auto-rows: minmax(44px, 1fr); }
.team .row { height: auto; padding-left: 53px; }
.team .l1 { padding-left: 41px; }
.peek { height: 17px; padding: 9px 0 0 53px; overflow: hidden; }
.scroll { position: absolute; top: 236px; right: 4px; width: 16px; height: 1079px; border-radius: 8px; background: #4d4d4d; }
.side-foot { height: 75px; display: flex; align-items: center; gap: 25px; padding: 0 26px 0 27px; border-top: 2px solid #2b2b2b; }
.help { margin-left: auto; }
.dark-hair { color: #40342f; }
.fair-hair { color: #e8b84c; }
.hair { fill: currentColor; }
.skin { fill: #f3dcc0; }

/* Page */
.main { flex: 1; min-width: 0; position: relative; padding-right: 3px; }
.topbar { height: 70px; display: flex; align-items: center; justify-content: space-between; padding: 0 25px 0 22px; font-size: 21px; }
.crumbs, .crumbs a, .actions { display: flex; align-items: center; }
.crumbs { gap: 13px; }
.crumbs a { gap: 10px; }
.crumbs span, .edited, .share { padding-bottom: 4px; }
.crumbs i { color: #4a4a4a; font-style: normal; }
.actions { gap: 22px; }
.edited { color: #5a5a5a; }
.share { color: #e6e6e6; font-weight: 500; margin-right: 6px; }
.actions .ic:last-child { margin-left: 6px; }

.doc { width: 1136px; max-width: 100%; margin: 0 auto; padding-top: 154px; }
.page-icon { margin-left: 2px; }
h1 { margin: 71px 0 34px 1px; font-size: 60px; line-height: 72px; font-weight: 700; }
.callout { padding: 33px 37px 27px; border-radius: 16px; background: #252525; font-size: 24px; line-height: 32px; }
.callout.second { margin-top: 88px; }
.tablewrap { position: relative; margin: 21px 2px 0; }
table { width: 100%; table-layout: fixed; border-collapse: collapse; }
td { height: 55px; padding: 11px 10px 11px 15px; border: 1px solid #2f2f2f; font-size: 21px; line-height: 32px; vertical-align: top; overflow-wrap: anywhere; }
td.num { font-size: 22px; }
.sp { background: repeating-linear-gradient(90deg, #b8452f 0 3px, transparent 3px 6px) left bottom / 100% 3px no-repeat; }
.mail { color: #9b9b9b; border-bottom: 1px solid #4a4a4a; }
.handle { position: absolute; left: -76px; top: 17px; display: flex; gap: 16px; color: #2f2f2f; }
.fab {
  position: fixed;
  right: 56px;
  bottom: 56px;
  width: 58px;
  height: 58px;
  border-radius: 50%;
  background: #d4d4d4;
  box-shadow: 0 4px 16px rgba(0, 0, 0, .3);
}
```
